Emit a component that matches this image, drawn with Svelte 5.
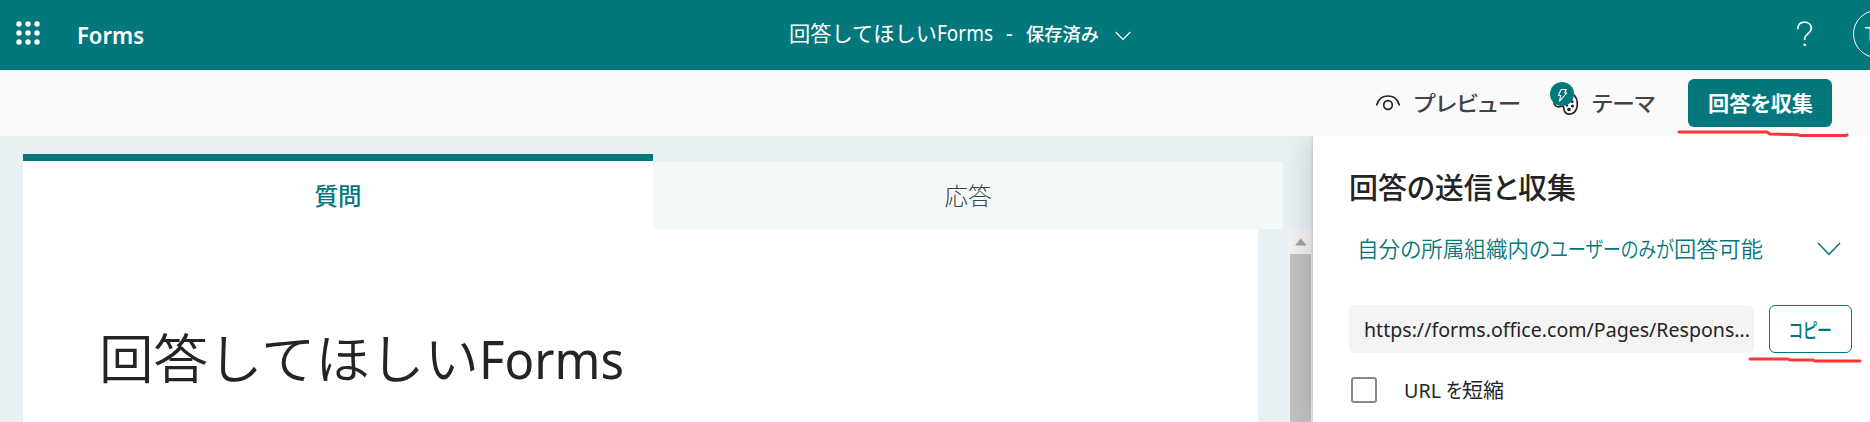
<script>
  const url = 'https://forms.office.com/Pages/Respons...';

  // Stretches or condenses a run of text to the given advance width.
  function fit(node, width) {
    const inner = node.firstElementChild;
    const natural = inner.getBoundingClientRect().width;
    node.style.width = width + 'px';
    inner.style.transform = `scaleX(${width / natural})`;
  }
</script>

{#snippet run(text, width)}
  <span class="run" use:fit={width}><span>{text}</span></span>
{/snippet}

<div class="app">
  <header>
    <svg class="waffle" width="24" height="24" viewBox="0 0 24 24" fill="#fff">
      {#each [3, 12, 21] as y}
        {#each [3, 12, 21] as x}
          <circle cx={x} cy={y} r="2.7" />
        {/each}
      {/each}
    </svg>
    <div class="brand">{@render run('Forms', 67)}</div>
    <div class="doc">
      {@render run('回答してほしい', 148)}{@render run('Forms', 56)}
      <span class="dash">-</span>
      <span class="saved">{@render run('保存済み', 73)}</span>
      <svg width="16" height="10" viewBox="0 0 16 10" fill="none" stroke="#fff" stroke-width="1.1">
        <path d="M.7 1 8 8.4 15.3 1" />
      </svg>
    </div>
    <svg class="help" width="17" height="26" viewBox="0 0 17 26" fill="none" stroke="#fff" stroke-width="1.7">
      <path d="M1.7 8.3C1.7 3.9 4.4 1.2 8.4 1.2s6.9 2.5 6.9 6.3c0 5.1-6.6 5.2-6.6 10.4v1.2" />
      <path d="M7.5 23.8h2.4" stroke-width="2.2" />
    </svg>
    <div class="avatar"><span>T</span></div>
  </header>

  <div class="toolbar">
    <div class="tool preview">
      <svg width="26" height="18" viewBox="0 0 26 18" fill="none" stroke="#242424" stroke-width="1.7" stroke-linecap="round">
        <path d="M1.8 10.8C3.5 5.1 7.8 2 13 2s9.5 3.1 11.2 8.8" />
        <circle cx="13" cy="11" r="4.3" />
      </svg>
      {@render run('プレビュー', 107)}
    </div>
    <div class="tool theme">
      <svg width="30" height="36" viewBox="0 0 30 36" fill="none">
        <path d="M4 21c0 4 3 5.500 6.500 4.500 3-1 3.200.5 3.400 2.500.4 4 3.300 5.700 6.900 5 5-1 7.200-6.500 6.400-12C26.500 16 23 12 18 11" stroke="#242424" stroke-width="1.7" />
        <g fill="#242424">
          <circle cx="19" cy="28.500" r="1.8" />
          <circle cx="22.500" cy="25" r="1.6" />
          <circle cx="22" cy="20.500" r="1.5" />
          <circle cx="17" cy="24.500" r="1.2" />
        </g>
        <circle cx="12" cy="13" r="12" fill="#03787c" />
        <path d="M11.200 8.500h5l-1.400 3.500h2l-7.300 8.200 1.200-5.700H8.300z" stroke="#fff" stroke-width="1.1" stroke-linejoin="round" />
      </svg>
      {@render run('テーマ', 63)}
    </div>
    <button class="collect">
      {@render run('回答を収集', 105)}
      <svg class="mark mark-a" width="172" height="8" viewBox="0 0 172 8" fill="none" stroke="#ff3636" stroke-width="3" stroke-linecap="round">
        <path d="M2 2h88l3 2 28 .8 2 .8h46l1-.7" />
      </svg>
    </button>
  </div>

  <main>
    <section class="editor">
      <div class="tabs">
        <div class="tab active">質問</div>
        <div class="tab">応答</div>
      </div>
      <div class="body">
        <div class="paper">
          <h1>{@render run('回答してほしい', 380)}{@render run('Forms', 145)}</h1>
        </div>
        <div class="scrollbar">
          <svg width="25" height="25" viewBox="0 0 25 25"><path d="M7 16.500 12.700 9.500l5.800 7z" fill="#a0a0a0" /></svg>
          <div class="thumb"></div>
        </div>
      </div>
    </section>

    <aside>
      <h2>{@render run('回答の送信と収集', 227)}</h2>
      <div class="audience">
        <div>
          {@render run('自分の所属組織内の', 193)}{@render run('ユーザーのみが', 124)}{@render run('回答可能', 89)}
        </div>
        <svg width="24" height="14" viewBox="0 0 24 14" fill="none" stroke="#03787c" stroke-width="1.5">
          <path d="M1 1l11 11.300L23 1" />
        </svg>
      </div>
      <div class="link">
        <div class="url">{@render run(url, 386)}</div>
        <button class="copy">
          {@render run('コピー', 43)}
          <svg class="mark mark-b" width="116" height="8" viewBox="0 0 116 8" fill="none" stroke="#ff3636" stroke-width="3" stroke-linecap="round">
            <path d="M2 2h38l2 1h23l2 1h45" />
          </svg>
        </button>
      </div>
      <label class="shorten">
        <span class="box"></span>
        <span class="txt">{@render run('URL', 37)}<i></i>{@render run('を', 16)}{@render run('短縮', 42)}</span>
      </label>
    </aside>
  </main>
</div>

<style>
  :global(body) { margin: 0; }
  .app {
    width: 1870px;
    height: 422px;
    overflow: hidden;
    background: #fff;
    color: #242424;
    font-family: 'Noto Sans', 'Noto Sans CJK JP', sans-serif;
    font-size: 21px;
    font-feature-settings: 'palt';
    display: flex;
    flex-direction: column;
  }
  .app * { box-sizing: border-box; }
  svg { display: block; flex: none; }
  h1, h2 { margin: 0; font-weight: 400; }
  button { font: inherit; padding: 0; border: 0; }
  .run { display: inline-block; white-space: nowrap; }
  .run > span { display: inline-block; transform-origin: 0 50%; }

  header {
    height: 70px;
    flex: none;
    background: #03787c;
    color: #fff;
    display: grid;
    grid-template-columns: 77px 712px 1007px 57px 48px;
  }
  .waffle { margin: 21px 0 0 16px; }
  .brand { font-size: 23px; font-weight: 600; line-height: 32px; padding-top: 19px; }
  .doc { display: flex; align-items: baseline; line-height: 30px; padding-top: 18px; font-feature-settings: normal; }
  .dash { margin-left: 13px; width: 20px; }
  .saved { font-size: 18px; font-weight: 500; }
  .doc svg { margin-left: 16px; }
  .help { margin: 21px 0 0; }
  .avatar {
    width: 48px;
    height: 48px;
    margin-top: 10px;
    border: 1.5px solid #fff;
    border-radius: 50%;
    font-size: 20px;
    line-height: 45px;
    padding-left: 11px;
  }

  .toolbar {
    height: 66px;
    flex: none;
    background: #fafafa;
    display: flex;
    justify-content: flex-end;
    align-items: center;
    padding-right: 38px;
    color: #424242;
    font-weight: 500;
  }
  .tool { display: flex; align-items: center; }
  .tool .run { margin-top: -2px; }
  .preview { gap: 13px; margin-right: 29px; }
  .theme { gap: 12px; margin-right: 33px; }
  .theme svg { margin-top: -9px; }
  .collect {
    position: relative;
    width: 144px;
    height: 48px;
    border-radius: 6px;
    background: #03787c;
    color: #fff;
    font-weight: 700;
  }
  .collect .run { margin-top: -2px; }
  .mark { position: absolute; z-index: 3; }
  .mark-a { left: -11px; top: 51px; }
  .mark-b { left: -22px; top: 51px; }

  main { display: flex; flex: 1; min-height: 0; background: #e8f0f3; }
  .editor { width: 1313px; padding: 18px 0 0 23px; display: flex; flex-direction: column; }
  .tabs { display: flex; align-items: flex-end; height: 75px; flex: none; }
  .tab {
    width: 630px;
    height: 67px;
    background: #f3f9f9;
    color: #424242;
    font-size: 23.5px;
    text-align: center;
    line-height: 68px;
    font-weight: 300;
  }
  .tab.active {
    height: 75px;
    background: #fff;
    border-top: 7px solid #03787c;
    color: #03787c;
    line-height: 70px;
    font-weight: 500;
  }
  .body { flex: 1; display: flex; justify-content: space-between; }
  .paper { width: 1235px; background: #fff; padding: 90px 0 0 76px; }
  h1 { font-size: 53px; line-height: 80px; white-space: nowrap; font-weight: 350; font-feature-settings: normal; }
  h1 :global(.run:last-child) { font-weight: 400; }
  .scrollbar { width: 25px; background: #f1f1f1; }
  .thumb { margin: 0 2px; height: 200px; background: #c1c1c1; }

  aside {
    position: relative;
    width: 557px;
    background: #fff;
    box-shadow: 0 0 28px rgba(0, 0, 0, .18), 0 0 3px rgba(0, 0, 0, .16);
    clip-path: inset(0 0 0 -40px);
    padding: 31px 0 0 36px;
  }
  h2 { font-size: 29px; font-weight: 500; line-height: 42px; }
  .audience {
    height: 48px;
    margin-top: 15px;
    display: flex;
    align-items: center;
    justify-content: space-between;
    padding: 0 29px 0 8px;
    color: #03787c;
    font-size: 22px;
    font-weight: 350;
    white-space: nowrap;
  }
  .audience > div { margin-top: -2px; }
  .audience svg { margin-top: 2px; }
  .link { display: flex; gap: 15px; margin-top: 33px; }
  .url {
    width: 405px;
    height: 48px;
    border-radius: 6px;
    background: #f4f4f4;
    padding-left: 15px;
    line-height: 48px;
    font-size: 20.5px;
  }
  .copy {
    position: relative;
    width: 83px;
    height: 48px;
    border: 1.5px solid #03787c;
    border-radius: 6px;
    background: #fff;
    color: #03787c;
    font-size: 20px;
    font-weight: 500;
  }
  .shorten { display: flex; align-items: center; margin: 24px 0 0 2px; }
  .box { width: 26px; height: 26px; border: 2px solid #8a8a8a; border-radius: 3px; }
  .txt { margin-left: 27px; line-height: 26px; font-size: 20.5px; font-weight: 400; white-space: nowrap; }
  .txt i { display: inline-block; width: 5px; }
</style>
